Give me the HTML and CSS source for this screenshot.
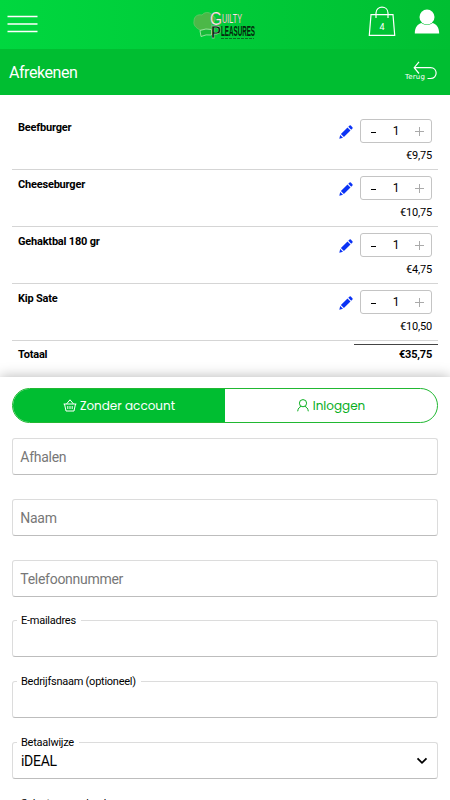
FILE: index.html
```html
<!DOCTYPE html>
<html lang="nl">
<head>
<meta charset="utf-8">
<meta name="viewport" content="width=device-width">
<title>Afrekenen</title>
<link rel="stylesheet" href="styles.css">
</head>
<body>
<svg class="defs" width="0" height="0" aria-hidden="true">
  <symbol id="pencil" viewBox="0 0 14 14">
    <path d="M0.3 13.7 1.2 10 4 12.8Z M1.9 9.1 8.5 2.5 11.5 5.5 4.9 12.1Z M9.3 1.8 10.6.5Q11.2 0 11.8.6L13.4 2.2Q14 2.8 13.5 3.4L12.2 4.7Z"/>
  </symbol>
</svg>
<header class="top">
  <svg class="menu" width="32" height="20" viewBox="0 0 32 20"><path d="M.5 1.5H30.5M.5 9H30.5M.5 16.5H30.5"/></svg>
  <svg class="logo" width="66" height="32" viewBox="0 0 66 32">
    <path class="hat" d="M7 21C3 19 0 16 1 12C1 7 5 5 9 6C12 2 18 3 20 7C24 8 22 13 19 15L18 21Z"/>
    <path class="band" d="M7 21.5Q13 19 18.500 20.500V26Q13 25 8 27.500Z"/>
    <text class="guilty big" x="17" y="15.500" textLength="12" lengthAdjust="spacingAndGlyphs">G</text>
    <text class="guilty" x="29" y="13.500" textLength="20" lengthAdjust="spacingAndGlyphs">UILTY</text>
    <text class="pleasures big" x="18" y="29" textLength="10" lengthAdjust="spacingAndGlyphs">P</text>
    <text class="pleasures" x="28" y="27" textLength="34" lengthAdjust="spacingAndGlyphs">LEASURES</text>
    <path class="tagline" d="M28 29.500H61"/>
  </svg>
  <div class="actions">
    <div class="bag">
      <svg width="28" height="31" viewBox="0 0 28 31"><path d="M3 8.700H25L26.700 29.300H1.300ZM8 12V7C8 -.8 20 -.8 20 7V12"/></svg>
      <span class="count">4</span>
    </div>
    <svg class="user" width="26" height="26" viewBox="0 0 26 26"><circle cx="13" cy="8" r="7.500"/><path d="M.8 24.500C.8 18 4 15 7.300 14Q13 18 18.700 14C22 15 25.200 18 25.200 24.500Z"/></svg>
  </div>
</header>
<div class="titlebar">
  <h1>Afrekenen</h1>
  <div class="back"><span>Terug</span><svg width="24" height="20" viewBox="0 0 24 20"><path d="M6 .8 1.200 6.700 6 12.500M1.200 6.700H17.500C25 6.700 25 17.500 17.500 17.500H14.500"/></svg></div>
</div>
<main>
  <section class="cart">
    <div class="item"><b>Beefburger</b><div class="right"><div class="controls"><svg class="pencil" width="14" height="14"><use href="#pencil"/></svg><div class="qty"><i class="minus"></i><span>1</span><i class="plus"></i></div></div><span class="price">€9,75</span></div></div>
    <div class="item"><b>Cheeseburger</b><div class="right"><div class="controls"><svg class="pencil" width="14" height="14"><use href="#pencil"/></svg><div class="qty"><i class="minus"></i><span>1</span><i class="plus"></i></div></div><span class="price">€10,75</span></div></div>
    <div class="item"><b>Gehaktbal 180 gr</b><div class="right"><div class="controls"><svg class="pencil" width="14" height="14"><use href="#pencil"/></svg><div class="qty"><i class="minus"></i><span>1</span><i class="plus"></i></div></div><span class="price">€4,75</span></div></div>
    <div class="item"><b>Kip Sate</b><div class="right"><div class="controls"><svg class="pencil" width="14" height="14"><use href="#pencil"/></svg><div class="qty"><i class="minus"></i><span>1</span><i class="plus"></i></div></div><span class="price">€10,50</span></div></div>
    <div class="total"><b>Totaal</b><b class="sum">€35,75</b></div>
  </section>
  <section class="checkout">
    <div class="tabs">
      <div class="tab active"><svg width="14" height="13" viewBox="0 0 14 13"><path d="M.6 5H13.400M1.500 5 3 12H11L12.500 5M3.500 5 7 .8 10.500 5M4.800 7V10M7 7V10M9.200 7V10"/></svg><span>Zonder account</span></div>
      <div class="tab"><svg width="12" height="13" viewBox="0 0 12 13"><circle cx="6" cy="4.200" r="3.600"/><path d="M.7 12.300C1 9.500 2.400 8 4.200 7.300M11.300 12.300C11 9.500 9.600 8 7.800 7.300"/></svg><span>Inloggen</span></div>
    </div>
    <div class="field hint">Afhalen</div>
    <div class="field hint">Naam</div>
    <div class="field hint">Telefoonnummer</div>
    <div class="field"><label>E-mailadres</label></div>
    <div class="field"><label>Bedrijfsnaam (optioneel)</label></div>
    <div class="field select"><label>Betaalwijze</label><span>iDEAL</span><svg width="12" height="8" viewBox="0 0 12 8"><path d="M1.500 1.300 6 5.800 10.500 1.300"/></svg></div>
    <div class="field"><label>Selecteer een bank</label></div>
  </section>
</main>
</body>
</html>
```

FILE: styles.css
```css
* { box-sizing: border-box; }
body { margin: 0; height: 800px; overflow: hidden; background: #fff; color: #000; font-family: Roboto, sans-serif; }
svg { display: block; flex: none; fill: none; }
.defs { position: absolute; }
.top { height: 49px; display: flex; align-items: flex-start; justify-content: space-between; padding: 0 10px 0 7px; background: linear-gradient(90deg, #00d73f, #00bf32); }
.menu { margin-top: 15px; stroke: #fff; stroke-width: 1.6; }
.logo { margin: 9px 0 0 45px; overflow: visible; font-family: "Liberation Sans", sans-serif; }
.hat { fill: #4cb848; stroke: #82ce7c; stroke-width: .5; }
.band { fill: #17bb39; stroke: #b7e8b5; stroke-width: .8; }
.guilty { font-size: 12px; fill: #ffe6ea; stroke: #9c4c58; stroke-width: .2; }
.guilty.big { font-size: 18px; }
.pleasures { font-size: 15px; font-weight: 700; fill: #05270c; }
.pleasures.big { font-size: 17px; stroke: #e8e8e8; stroke-width: .3; }
.tagline { stroke: #0a6d22; stroke-width: 1; stroke-dasharray: 3 1; }
.actions { display: flex; gap: 18px; }
.bag { position: relative; margin-top: 6px; }
.bag svg { stroke: #fff; stroke-width: 1.2; }
.count { position: absolute; left: 0; right: 0; top: 15px; text-align: center; font: 9px/12px Roboto, sans-serif; color: #fff; }
.user { margin-top: 9px; fill: #fff; }
.titlebar { height: 46px; display: flex; justify-content: space-between; padding: 0 13px 0 9px; background: #00be31; color: #fff; }
h1 { margin: 14px 0 0; font-size: 16px; line-height: 20px; font-weight: 400; letter-spacing: -.45px; }
.back { display: flex; margin-top: 12px; }
.back span { margin: 11px -13px 0 0; font: 7px/10px "DejaVu Sans", sans-serif; letter-spacing: .15px; }
.back svg { margin-left: 1px; stroke: #fff; stroke-width: 1.2; }
.cart { padding: 18px 12px 0; height: 282px; font-size: 11px; letter-spacing: -.2px; }
.item { height: 57px; display: flex; justify-content: space-between; padding: 6px 6px 0; border-bottom: 1px solid #d5d5d5; }
.item b { line-height: 16px; padding-top: 1px; }
.right { display: flex; flex-direction: column; align-items: flex-end; }
.controls { display: flex; align-items: center; gap: 7px; }
.pencil { fill: #0a32f5; margin-top: 1px; }
.qty { width: 72px; height: 24px; display: grid; grid-template-columns: 24px 22px 24px; align-items: center; justify-items: center; border: 1px solid #c4c4c4; border-radius: 3px; font-size: 12px; }
.minus { width: 5px; height: 1.5px; background: #000; margin-top: 3px; }
.plus { width: 9px; height: 9px; background: linear-gradient(#aaa, #aaa) center / 9px 1px no-repeat, linear-gradient(#aaa, #aaa) center / 1px 9px no-repeat; }
.price { margin-top: 5px; line-height: 15px; }
.total { display: flex; justify-content: space-between; padding-left: 6px; }
.total b { padding-top: 6px; line-height: 16px; }
.total .sum { margin-top: 3px; padding: 2px 6px 0 0; width: 84px; text-align: right; border-top: 1px solid #444; }
.checkout { height: 423px; overflow: hidden; padding: 11px 12px 0; box-shadow: 0 -1px 12px rgba(0,0,0,.26); background: #fff; }
.tabs { height: 35px; display: grid; grid-template-columns: 1fr 1fr; border: 1px solid #21b832; border-radius: 18px; overflow: hidden; margin-bottom: 15px; font-family: Poppins, Inter, sans-serif; font-size: 12px; color: #08ae1d; }
.tab { display: flex; align-items: center; justify-content: center; gap: 4px; }
.tab svg { stroke: currentColor; stroke-width: 1; }
.tab.active { background: #00be31; color: #fff; gap: 3px; }
.field { position: relative; height: 37px; margin-bottom: 23.8px; display: flex; align-items: center; padding: 1px 8px 0 7.3px; border: 1px solid #dcdcdc; border-bottom-color: #bdbdbd; border-radius: 3px; font-size: 14px; line-height: 16px; letter-spacing: -.28px; }
.hint { color: #777; }
label { position: absolute; left: 4px; top: -7px; padding: 0 5px 0 4px; background: #fff; font-size: 11px; line-height: 14px; letter-spacing: -.25px; }
.select { justify-content: space-between; padding-left: 8px; }
.select svg { stroke: #000; stroke-width: 1.8; margin-right: 1px; }
```
